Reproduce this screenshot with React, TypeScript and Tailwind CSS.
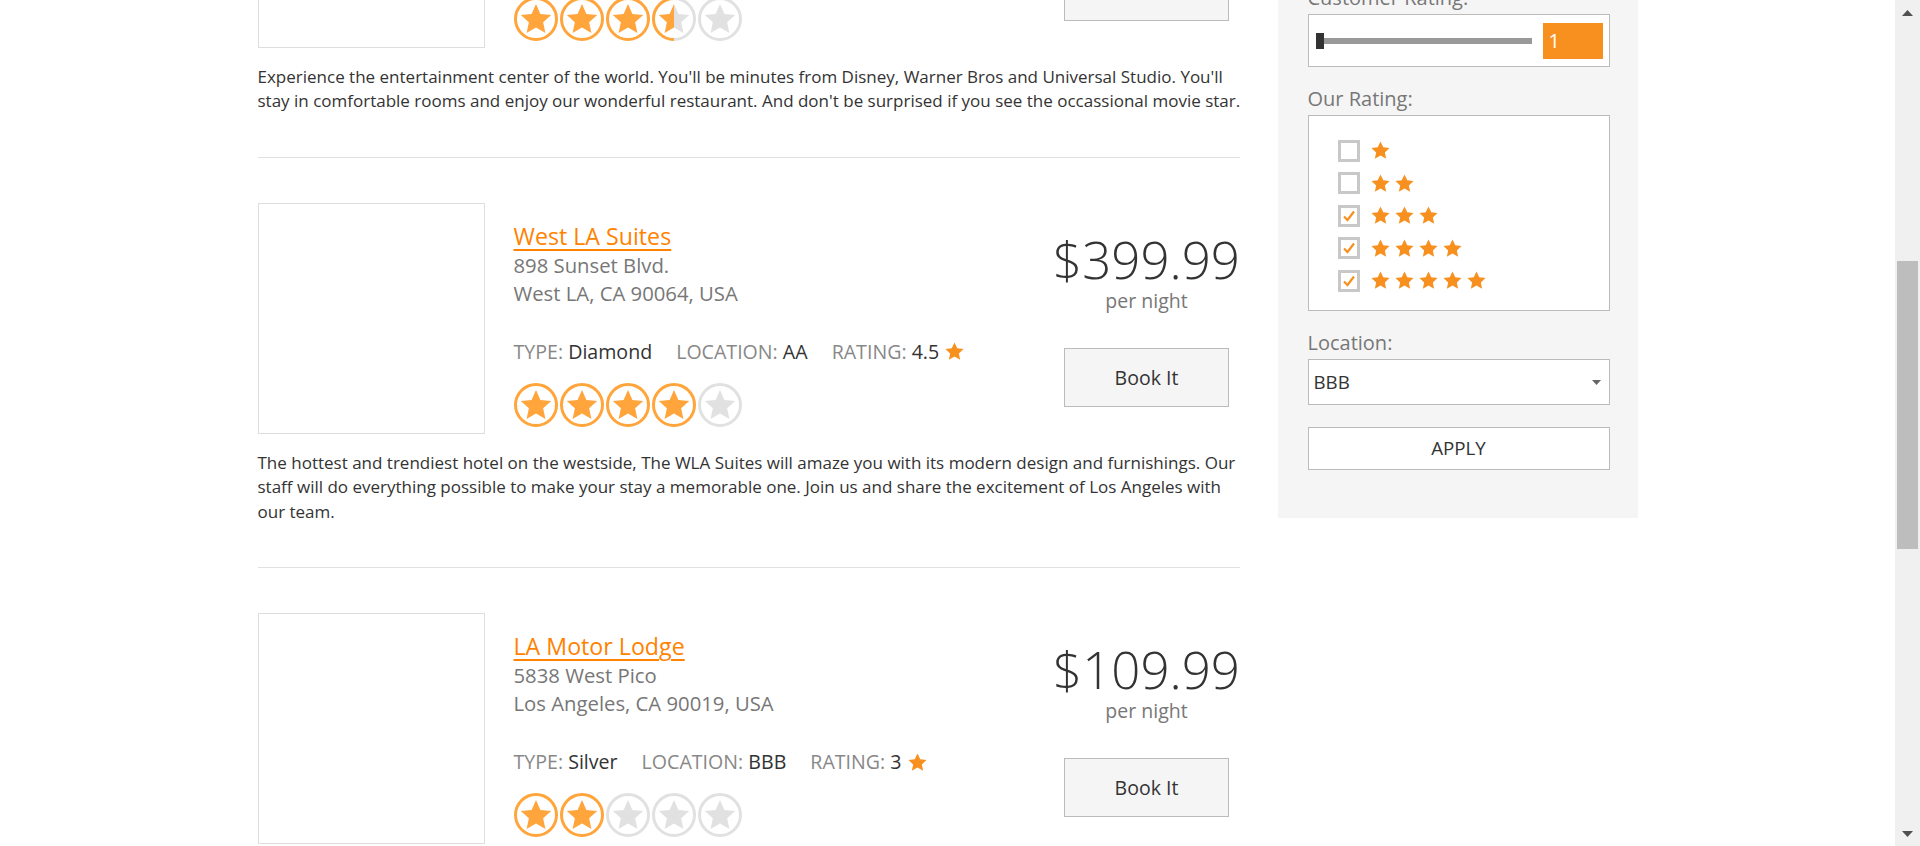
import React, { useId } from 'react';

const STAR_PATH =
  'M22 7 L26.41 16.93 L37.22 18.06 L29.13 25.32 L31.40 35.94 L22 30.5 L12.60 35.94 L14.87 25.32 L6.78 18.06 L17.59 16.93 Z';

function CircleStarIcon({ color }: { color: string }) {
  return (
    <>
      <circle cx="22" cy="22" r="20.5" fill="white" stroke={color} strokeWidth="3" />
      <path d={STAR_PATH} fill={color} />
    </>
  );
}

function CircleStar({ fill }: { fill: 'full' | 'half' | 'empty' }) {
  const rid = useId().replace(/[^a-zA-Z0-9]/g, '');
  const on = '#ffa53b';
  const off = '#e1e1e1';
  return (
    <svg width="44" height="44" viewBox="0 0 44 44" className="shrink-0">
      {fill === 'full' && <CircleStarIcon color={on} />}
      {fill === 'empty' && <CircleStarIcon color={off} />}
      {fill === 'half' && (
        <>
          <defs>
            <clipPath id={`h${rid}`}>
              <rect x="0" y="0" width="22" height="44" />
            </clipPath>
          </defs>
          <CircleStarIcon color={off} />
          <g clipPath={`url(#h${rid})`}>
            <CircleStarIcon color={on} />
          </g>
        </>
      )}
    </svg>
  );
}

function SolidStar({ size = 19, color = '#f7901e' }: { size?: number; color?: string }) {
  return (
    <svg width={size} height={size} viewBox="5 5 34 34" className="shrink-0">
      <path d="M22 6 L26.9 16.4 L38.2 17.7 L29.8 25.4 L32.1 36.6 L22 30.9 L11.9 36.6 L14.2 25.4 L5.8 17.7 L17.1 16.4 Z" fill={color} />
    </svg>
  );
}

type Hotel = {
  name: string;
  addr1: string;
  addr2: string;
  type: string;
  location: string;
  rating: string;
  stars: number;
  price: string;
  desc: string;
};

const hotels: Hotel[] = [
  {
    name: 'Hollywood Inn',
    addr1: '6724 Hollywood Blvd.',
    addr2: 'Hollywood, CA 90028, USA',
    type: 'Gold',
    location: 'AA',
    rating: '4',
    stars: 3.5,
    price: '$249.99',
    desc: "Experience the entertainment center of the world. You'll be minutes from Disney, Warner Bros and Universal Studio. You'll stay in comfortable rooms and enjoy our wonderful restaurant. And don't be surprised if you see the occassional movie star.",
  },
  {
    name: 'West LA Suites',
    addr1: '898 Sunset Blvd.',
    addr2: 'West LA, CA 90064, USA',
    type: 'Diamond',
    location: 'AA',
    rating: '4.5',
    stars: 4,
    price: '$399.99',
    desc: 'The hottest and trendiest hotel on the westside, The WLA Suites will amaze you with its modern design and furnishings. Our staff will do everything possible to make your stay a memorable one. Join us and share the excitement of Los Angeles with our team.',
  },
  {
    name: 'LA Motor Lodge',
    addr1: '5838 West Pico',
    addr2: 'Los Angeles, CA 90019, USA',
    type: 'Silver',
    location: 'BBB',
    rating: '3',
    stars: 2,
    price: '$109.99',
    desc: 'A clean and affordable place to stay in the heart of Los Angeles. Close to downtown, museums and the beach.',
  },
];

function HotelCard({ h }: { h: Hotel }) {
  const icons = [0, 1, 2, 3, 4].map((i) => {
    if (h.stars >= i + 1) return 'full' as const;
    if (h.stars > i) return 'half' as const;
    return 'empty' as const;
  });
  return (
    <div className="border-b border-[#e0e0e0] pt-[45px] pb-[43px]">
      <div className="flex">
        <div className="h-[231px] w-[227px] shrink-0 border border-[#dedede] bg-white" />
        <div className="ml-[29px] flex-1 pt-[18px]">
          <a
            href="#"
            className="block w-fit text-[23.2px] leading-[30px] text-[#ff8200] underline decoration-[2px] underline-offset-[4px]"
          >
            {h.name}
          </a>
          <div className="text-[20.3px] leading-[28px] text-[#777777]">{h.addr1}</div>
          <div className="text-[20.3px] leading-[28px] text-[#777777]">{h.addr2}</div>
          <div className="mt-[31px] flex h-[28px] items-center gap-[24px] text-[19.6px] leading-[28px]">
            <span>
              <span className="text-[#888888]">TYPE: </span>
              <span className="text-[#333333]">{h.type}</span>
            </span>
            <span>
              <span className="text-[#888888]">LOCATION: </span>
              <span className="text-[#333333]">{h.location}</span>
            </span>
            <span className="flex items-center gap-[6px]">
              <span>
                <span className="text-[#888888]">RATING: </span>
                <span className="text-[#333333]">{h.rating}</span>
              </span>
              <SolidStar size={19} />
            </span>
          </div>
          <div className="mt-[17px] flex gap-[2px]">
            {icons.map((f, i) => (
              <CircleStar key={i} fill={f} />
            ))}
          </div>
        </div>
        <div className="flex w-[186px] shrink-0 flex-col items-center pt-[29px]">
          <div className="text-[51px] font-light leading-[54px] text-[#333333]">{h.price}</div>
          <div className="mt-[3px] text-[19.5px] leading-[24px] text-[#777777]">per night</div>
          <button className="mt-[35px] h-[59px] w-[165px] border border-[#bbbbbb] bg-[#f5f5f5] text-[19.5px] text-[#333333]">
            Book It
          </button>
        </div>
      </div>
      <p className="mt-[17px] -mr-[10px] text-[17px] leading-[24.4px] text-[#333333]">{h.desc}</p>
    </div>
  );
}

function Checkbox({ checked }: { checked: boolean }) {
  return (
    <div className="flex h-[22px] w-[22px] shrink-0 items-center justify-center border-[3px] border-[#c8c8c8] bg-white">
      {checked && (
        <svg width="14" height="14" viewBox="0 0 14 14">
          <path d="M2 7.5 L5.5 11 L12 2.5" fill="none" stroke="#f7901e" strokeWidth="2.2" />
        </svg>
      )}
    </div>
  );
}

function Label({ children }: { children: React.ReactNode }) {
  return <div className="mb-[4px] text-[20px] leading-[24px] text-[#777777]">{children}</div>;
}

function Sidebar() {
  const rows = [
    { n: 1, c: false },
    { n: 2, c: false },
    { n: 3, c: true },
    { n: 4, c: true },
    { n: 5, c: true },
  ];
  return (
    <aside className="w-[360px] shrink-0 self-start bg-[#f5f5f5] pt-[29px] pr-[28px] pb-[48px] pl-[30px]">
      <div className="flex flex-col gap-[20px]">
        <div>
          <Label>Hotel Name:</Label>
          <div className="h-[46px] border border-[#bbbbbb] bg-white" />
        </div>
        <div>
          <Label>Price:</Label>
          <div className="h-[43px] border border-[#bbbbbb] bg-white" />
        </div>
        <div>
          <Label>Customer Rating:</Label>
          <div className="flex h-[53px] items-center border border-[#bbbbbb] bg-white pr-[6px] pl-[7px]">
            <div className="flex flex-1 items-center">
              <div className="h-[16px] w-[8px] shrink-0 bg-[#333333]" />
              <div className="h-[6px] flex-1 bg-[#999999]" />
            </div>
            <div className="ml-[11px] flex h-[36px] w-[60px] items-center bg-[#f7901e] pl-[6px] text-[20px] text-white">
              1
            </div>
          </div>
        </div>
        <div>
          <Label>Our Rating:</Label>
          <div className="flex flex-col gap-[11.5px] border border-[#bbbbbb] bg-white pt-[24px] pb-[19px] pl-[29px]">
            {rows.map((r) => (
              <div key={r.n} className="flex h-[21px] items-center gap-[11px]">
                <Checkbox checked={r.c} />
                <div className="flex gap-[5px]">
                  {Array.from({ length: r.n }).map((_, i) => (
                    <SolidStar key={i} size={19} />
                  ))}
                </div>
              </div>
            ))}
          </div>
        </div>
        <div>
          <Label>Location:</Label>
          <div className="flex h-[46px] items-center justify-between border border-[#bbbbbb] bg-white pr-[8px] pl-[5px] text-[18.75px] text-[#333333]">
            <span>BBB</span>
            <svg width="9" height="5" viewBox="0 0 9 5">
              <path d="M0 0 L9 0 L4.5 5 Z" fill="#666666" />
            </svg>
          </div>
        </div>
        <button className="mt-[2px] h-[43px] w-full border border-[#bbbbbb] bg-white text-[18.75px] text-[#333333]">
          APPLY
        </button>
      </div>
    </aside>
  );
}

function Scrollbar() {
  return (
    <div className="flex h-[846px] w-[25px] shrink-0 flex-col bg-[#f0f0f0]">
      <div className="flex h-[25px] items-center justify-center">
        <svg width="11" height="6" viewBox="0 0 11 6">
          <path d="M5.5 0 L11 6 L0 6 Z" fill="#505050" />
        </svg>
      </div>
      <div className="flex-1 pl-[2px]">
        <div className="mt-[236px] h-[288px] w-[21px] bg-[#bdbdbd]" />
      </div>
      <div className="flex h-[25px] items-center justify-center">
        <svg width="11" height="6" viewBox="0 0 11 6">
          <path d="M0 0 L11 0 L5.5 6 Z" fill="#505050" />
        </svg>
      </div>
    </div>
  );
}

export default function App() {
  return (
    <div className="flex h-[846px] w-[1920px] overflow-hidden bg-white font-['Open_Sans',sans-serif]">
      <div className="h-[846px] flex-1 overflow-hidden">
        <div className="mx-auto -mt-[228px] flex w-[1380px] gap-[38px]">
          <div className="w-[982px] shrink-0">
            {hotels.map((h) => (
              <HotelCard key={h.name} h={h} />
            ))}
          </div>
          <Sidebar />
        </div>
      </div>
      <Scrollbar />
    </div>
  );
}
